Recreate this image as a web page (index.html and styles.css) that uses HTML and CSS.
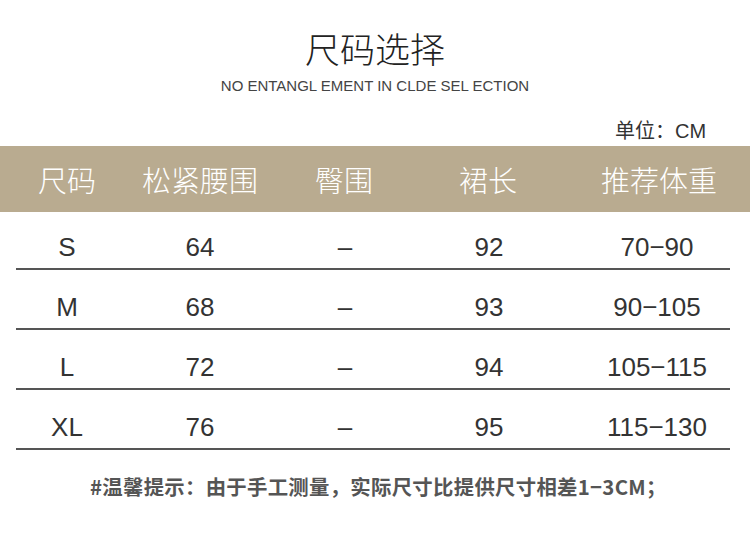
FILE: index.html
```html
<!DOCTYPE html>
<html lang="zh">
<head>
<meta charset="utf-8">
<link rel="stylesheet" href="styles.css">
</head>
<body>
<div class="page">
  <h1 class="title">尺码选择</h1>
  <p class="subtitle">NO ENTANGL EMENT IN CLDE SEL ECTION</p>
  <p class="unit">单位：CM</p>
  <div class="head">
    <span>尺码</span><span>松紧腰围</span><span>臀围</span><span>裙长</span><span class="last">推荐体重</span>
  </div>
  <div class="rows">
    <div class="row"><span>S</span><span>64</span><span>–</span><span>92</span><span class="last">70−90</span></div>
    <div class="row"><span>M</span><span>68</span><span>–</span><span>93</span><span class="last">90−105</span></div>
    <div class="row"><span>L</span><span>72</span><span>–</span><span>94</span><span class="last">105−115</span></div>
    <div class="row"><span>XL</span><span>76</span><span>–</span><span>95</span><span class="last">115−130</span></div>
  </div>
  <p class="note">#温馨提示：由于手工测量，实际尺寸比提供尺寸相差1−3CM；</p>
</div>
</body>
</html>
```

FILE: styles.css
```css
html, body {
  margin: 0;
  padding: 0;
  background: #ffffff;
}
.page {
  width: 750px;
  height: 536px;
  overflow: hidden;
  font-family: "Liberation Sans", "Noto Sans CJK SC", sans-serif;
  color: #333;
}
.title {
  margin: 0;
  padding-top: 28px;
  height: 40px;
  line-height: 40px;
  text-align: center;
  font-family: "Noto Sans CJK SC", sans-serif;
  font-weight: 300;
  font-size: 35px;
  color: #222;
}
.subtitle {
  margin: 8px 0 0;
  height: 20px;
  line-height: 20px;
  text-align: center;
  font-size: 15px;
  color: #444;
}
.unit {
  margin: 23px 0 0;
  height: 24px;
  line-height: 24px;
  padding-left: 615px;
  font-size: 20px;
  color: #333;
}
.head {
  margin-top: 3px;
  height: 66px;
  background: #b9ab90;
  display: grid;
  grid-template-columns: 134px 132px 156px 132px 196px;
  align-items: center;
  color: #fff;
  font-family: "Noto Sans CJK SC", sans-serif;
  font-weight: 300;
  font-size: 29px;
}
.head span {
  text-align: center;
}
.head .last {
  padding-left: 14px;
}
.rows {
  margin: 0 20px 0 16px;
}
.row {
  display: grid;
  grid-template-columns: 102px 164px 126px 162px 160px;
  height: 58px;
  align-items: end;
  border-bottom: 2px solid #555;
  font-size: 26px;
  line-height: 30px;
  color: #333;
}
.row:first-child {
  height: 56px;
}
.row span {
  text-align: center;
  padding-bottom: 6px;
}
.row .last {
  padding-left: 14px;
}
.note {
  margin: 22px 0 0;
  padding-left: 90px;
  font-size: 20.4px;
  letter-spacing: 0.28px;
  line-height: 28px;
  font-weight: bold;
  color: #555;
  font-family: "Noto Sans CJK SC", sans-serif;
}
```
